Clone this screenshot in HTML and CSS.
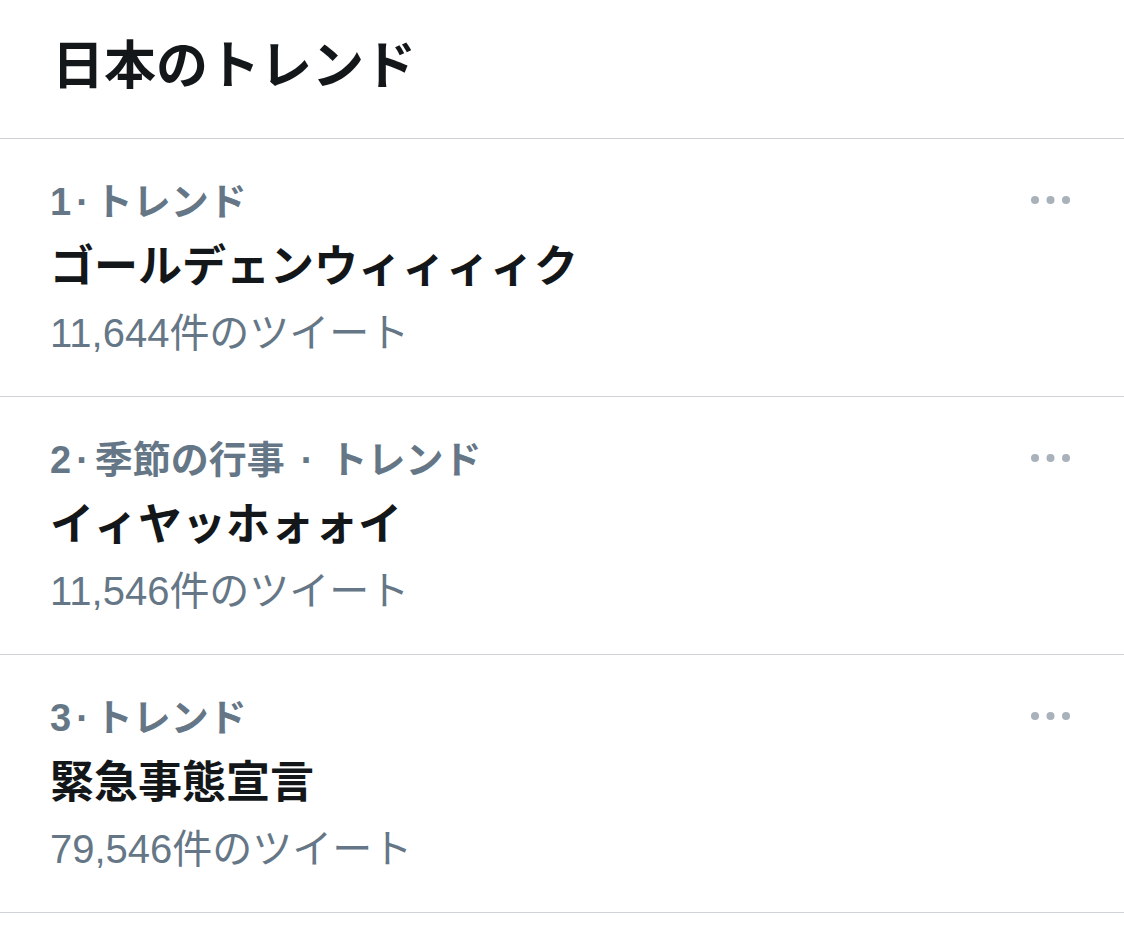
FILE: index.html
```html
<!doctype html>
<html>
<head>
<meta charset="utf-8">
<link rel="stylesheet" href="styles.css">
</head>
<body>
<div class="panel">
  <h2 class="panel-title">日本のトレンド</h2>

  <div class="trend">
    <div class="trend-body">
      <div class="trend-meta">1<span class="sep">·</span>トレンド</div>
      <div class="trend-name">ゴールデェンウィィィィク</div>
      <div class="trend-count">11,644件のツイート</div>
    </div>
    <div class="more">
      <svg width="39" height="8" viewBox="0 0 39 8"><circle cx="4" cy="4" r="4"/><circle cx="19.5" cy="4" r="4"/><circle cx="35" cy="4" r="4"/></svg>
    </div>
  </div>

  <div class="trend">
    <div class="trend-body">
      <div class="trend-meta">2<span class="sep">·</span>季節の行事<span class="sep wide">·</span>トレンド</div>
      <div class="trend-name">イィヤッホォォイ</div>
      <div class="trend-count">11,546件のツイート</div>
    </div>
    <div class="more">
      <svg width="39" height="8" viewBox="0 0 39 8"><circle cx="4" cy="4" r="4"/><circle cx="19.5" cy="4" r="4"/><circle cx="35" cy="4" r="4"/></svg>
    </div>
  </div>

  <div class="trend">
    <div class="trend-body">
      <div class="trend-meta">3<span class="sep">·</span>トレンド</div>
      <div class="trend-name">緊急事態宣言</div>
      <div class="trend-count">79,546件のツイート</div>
    </div>
    <div class="more">
      <svg width="39" height="8" viewBox="0 0 39 8"><circle cx="4" cy="4" r="4"/><circle cx="19.5" cy="4" r="4"/><circle cx="35" cy="4" r="4"/></svg>
    </div>
  </div>
</div>
</body>
</html>
```

FILE: styles.css
```css
html { font-family: "Liberation Sans", "Noto Sans CJK JP", sans-serif; }
body { margin: 0; background: #fff; color: #14171a; }

.panel { width: 1124px; }

.panel-title {
  margin: 0; height: 139px; box-sizing: border-box;
  padding: 30px 0 0 52px;
  font-size: 52px; line-height: 72px; font-weight: 700;
  border-bottom: 1px solid #cfd3d7;
}

.trend {
  display: flex; align-items: flex-start;
  height: 258px; box-sizing: border-box;
  padding: 37px 54px 0 50px;
  border-bottom: 1px solid #cfd3d7;
}
.trend-body { flex: 1; }

.trend-meta { font-size: 38px; line-height: 52px; font-weight: 700; color: #657786; }
.trend-meta .sep { margin: 0 6px 0 5px; }
.trend-meta .sep.wide { margin: 0 16px; }
.trend-name { margin-top: 5px; font-size: 44px; line-height: 68px; font-weight: 700; color: #14171a; }
.trend-count { margin-top: 6px; font-size: 40px; line-height: 52px; color: #657786; }

.more { padding-top: 20px; }
.more svg { display: block; fill: #a9b1bb; }
```
